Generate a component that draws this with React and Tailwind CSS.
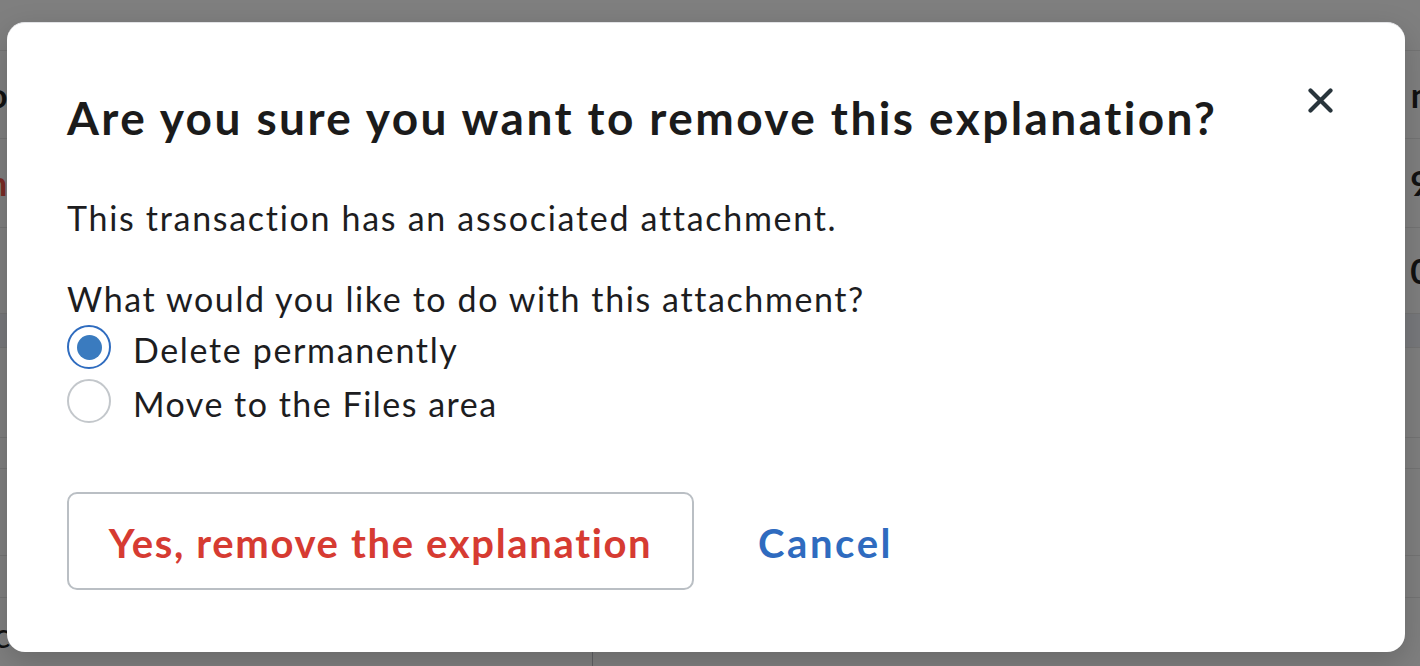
import React from "react";

function Radio({ checked }) {
  return checked ? (
    <span className="flex h-[44px] w-[44px] shrink-0 items-center justify-center rounded-full border-[2px] border-[#2f6cbf] bg-white">
      <span className="h-[25px] w-[25px] rounded-full bg-[#3a7bbf]" />
    </span>
  ) : (
    <span className="h-[44px] w-[44px] shrink-0 rounded-full border-[2px] border-[#c3c7cb] bg-white" />
  );
}

function BgRow({ h, left, right, leftColor = "text-[#111]", band = false }) {
  return (
    <div
      className={`flex items-center justify-between border-t border-[#747474] ${band ? "bg-[#78797c]" : ""} ${h}`}
    >
      <span className={`-ml-[12px] text-[34px] font-bold leading-none ${leftColor}`}>{left}</span>
      <span className="-mr-[10px] text-[34px] font-bold leading-none text-[#111]">{right}</span>
    </div>
  );
}

export default function App() {
  return (
    <div
      className="relative h-[666px] w-[1420px] overflow-hidden bg-[#7f7f7f]"
      style={{ fontFamily: "Lato, 'Noto Sans', sans-serif" }}
    >
      {/* page behind the overlay */}
      <div className="flex h-full flex-col">
        <div className="h-[50px]" />
        <BgRow h="h-[88px]" left="o" right="n" />
        <BgRow h="h-[89px]" left="n" right="9" leftColor="text-[#7a2a24]" />
        <BgRow h="h-[86px]" left="" right="0" />
        <BgRow h="h-[34px]" left="" right="" band />
        <BgRow h="h-[90px]" left="" right="" />
        <BgRow h="h-[31px]" left="" right="" />
        <BgRow h="h-[87px]" left="" right="" />
        <BgRow h="h-[42px]" left="" right="" />
        <div className="flex flex-1 border-t border-[#747474]">
          <div className="flex w-[593px] items-end border-r border-[#5f6063] pb-[14px]">
            <span className="-ml-[6px] text-[34px] leading-none text-[#111]">c</span>
          </div>
        </div>
      </div>

      {/* modal */}
      <div className="absolute left-[7px] top-[22px] flex h-[630px] w-[1398px] flex-col rounded-[18px] border-t border-[#e2e3e6] bg-white pl-[60px] pr-[72px] pt-[67px] text-[#1d1d1f] shadow-[0_10px_30px_rgba(0,0,0,0.18)]">
        <div className="flex items-start justify-between">
          <h1 className="text-[46px] font-bold leading-[56px] tracking-[2.42px] text-[#1b1b1b]">
            Are you sure you want to remove this explanation?
          </h1>
          <button className="mt-[-2px] flex h-[25px] w-[25px] items-center justify-center">
            <svg width="25" height="25" viewBox="0 0 25 25" fill="none">
              <path
                d="M2.5 2.5L22.5 22.5M22.5 2.5L2.5 22.5"
                stroke="#29353c"
                strokeWidth="4.2"
                strokeLinecap="round"
              />
            </svg>
          </button>
        </div>

        <p className="mt-[52px] text-[34px] leading-[40px] tracking-[1.7px]">
          This transaction has an associated attachment.
        </p>

        <p className="mt-[41px] text-[34px] leading-[40px] tracking-[1.6px]">
          What would you like to do with this attachment?
        </p>

        <div className="mt-[1px] flex flex-col">
          <label className="flex h-[54px] items-center gap-[22px]">
            <Radio checked />
            <span className="pt-[6px] text-[34px] leading-[48px] tracking-[1.65px]">Delete permanently</span>
          </label>
          <label className="flex h-[54px] items-center gap-[22px]">
            <Radio />
            <span className="pt-[6px] text-[34px] leading-[48px] tracking-[1.5px]">Move to the Files area</span>
          </label>
        </div>

        <div className="mt-[64px] flex items-center gap-[64px]">
          <button className="flex h-[98px] w-[627px] items-center justify-center rounded-[10px] border-[2px] border-[#babfc4] bg-white pt-[4px] text-[40px] font-bold leading-none tracking-[1.65px] text-[#d63b32]">
            Yes, remove the explanation
          </button>
          <button className="pt-[4px] text-[40px] font-bold leading-none tracking-[2.6px] text-[#2f6bbf]">Cancel</button>
        </div>
      </div>
    </div>
  );
}
